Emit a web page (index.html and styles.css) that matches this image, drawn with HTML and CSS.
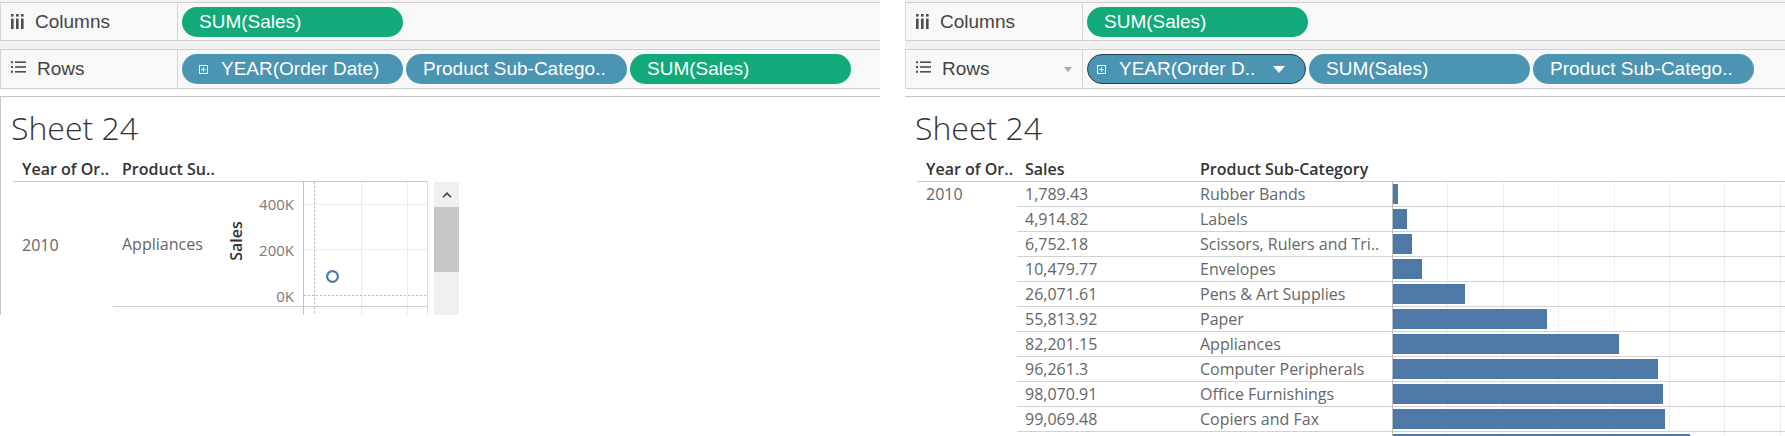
FILE: index.html
```html
<!DOCTYPE html>
<html>
<head>
<meta charset="utf-8">
<title>Sheet 24</title>
<link rel="stylesheet" href="styles.css">
</head>
<body>
<div class="page">
  <section class="panel panel-left">
    <div class="shelves">
      <div class="shelf shelf-cols">
        <div class="shelf-label">
          <svg class="ico ico-cols" width="13" height="15" viewBox="0 0 13 15"><rect x="0" y="0" width="2.6" height="2.6"/><rect x="0" y="4.6" width="2.6" height="10.4"/><rect x="5" y="0" width="2.6" height="2.6"/><rect x="5" y="4.6" width="2.6" height="10.4"/><rect x="10" y="0" width="2.6" height="2.6"/><rect x="10" y="4.6" width="2.6" height="10.4"/></svg>
          <span>Columns</span>
        </div>
        <div class="pills">
          <div class="pill pill-green">SUM(Sales)</div>
        </div>
      </div>
      <div class="shelf shelf-rows">
        <div class="shelf-label">
          <svg class="ico ico-rows" width="15" height="12" viewBox="0 0 15 12"><rect x="0" y="0.2" width="2" height="2"/><rect x="4" y="0.4" width="11" height="1.6"/><rect x="0" y="5" width="2" height="2"/><rect x="4" y="5.2" width="11" height="1.6"/><rect x="0" y="9.8" width="2" height="2"/><rect x="4" y="10" width="11" height="1.6"/></svg>
          <span>Rows</span>
        </div>
        <div class="pills">
          <div class="pill pill-blue"><svg class="ico-plus" width="9" height="9" viewBox="0 0 9 9"><rect x="0.5" y="0.5" width="8" height="8"/><path d="M2.2 4.5H6.8M4.5 2.2V6.8"/></svg><span>YEAR(Order Date)</span></div>
          <div class="pill pill-blue">Product Sub-Catego..</div>
          <div class="pill pill-green">SUM(Sales)</div>
        </div>
      </div>
    </div>
    <div class="sheet sheet-left">
      <h1 class="sheet-title">Sheet 24</h1>
      <div class="lt">
        <div class="hcell lt-h1">Year of Or..</div>
        <div class="hcell lt-h2">Product Su..</div>
        <div class="cell lt-year">2010</div>
        <div class="cell lt-cat">Appliances</div>
        <div class="lt-axis-title"><span>Sales</span></div>
        <div class="lt-ticks"><span>400K</span><span>200K</span><span>0K</span></div>
        <div class="lt-plot">
          <svg width="124" height="124" viewBox="0 0 124 124">
            <line x1="0" y1="22.5" x2="124" y2="22.5" class="g"/>
            <line x1="0" y1="67.5" x2="124" y2="67.5" class="g"/>
            <line x1="57.5" y1="0" x2="57.5" y2="124" class="g"/>
            <line x1="103.5" y1="0" x2="103.5" y2="124" class="g"/>
            <line x1="123.5" y1="0" x2="123.5" y2="124" class="edge"/>
            <line x1="0" y1="113.5" x2="124" y2="113.5" class="zero"/>
            <line x1="10.5" y1="0" x2="10.5" y2="124" class="zero"/>
            <circle cx="28.5" cy="94.5" r="5.4" class="mark"/>
          </svg>
        </div>
        <div class="lt-plot lt-plot-next">
          <svg width="124" height="20" viewBox="0 0 124 20">
            <line x1="57.5" y1="0" x2="57.5" y2="20" class="g"/>
            <line x1="103.5" y1="0" x2="103.5" y2="20" class="g"/>
            <line x1="123.5" y1="0" x2="123.5" y2="20" class="edge"/>
            <line x1="10.5" y1="0" x2="10.5" y2="20" class="zero"/>
          </svg>
        </div>
        <div class="lt-scroll">
          <svg class="scroll-up" width="10" height="6" viewBox="0 0 10 6"><path d="M1 5.2L5 1.2L9 5.2"/></svg>
          <div class="scroll-thumb"></div>
        </div>
      </div>
    </div>
  </section>

  <section class="panel panel-right">
    <div class="shelves">
      <div class="shelf shelf-cols">
        <div class="shelf-label">
          <svg class="ico ico-cols" width="13" height="15" viewBox="0 0 13 15"><rect x="0" y="0" width="2.6" height="2.6"/><rect x="0" y="4.6" width="2.6" height="10.4"/><rect x="5" y="0" width="2.6" height="2.6"/><rect x="5" y="4.6" width="2.6" height="10.4"/><rect x="10" y="0" width="2.6" height="2.6"/><rect x="10" y="4.6" width="2.6" height="10.4"/></svg>
          <span>Columns</span>
        </div>
        <div class="pills">
          <div class="pill pill-green">SUM(Sales)</div>
        </div>
      </div>
      <div class="shelf shelf-rows">
        <div class="shelf-label">
          <svg class="ico ico-rows" width="15" height="12" viewBox="0 0 15 12"><rect x="0" y="0.2" width="2" height="2"/><rect x="4" y="0.4" width="11" height="1.6"/><rect x="0" y="5" width="2" height="2"/><rect x="4" y="5.2" width="11" height="1.6"/><rect x="0" y="9.8" width="2" height="2"/><rect x="4" y="10" width="11" height="1.6"/></svg>
          <span>Rows</span>
          <svg class="label-drop" width="8" height="5" viewBox="0 0 8 5"><path d="M0 0H8L4 5Z"/></svg>
        </div>
        <div class="pills">
          <div class="pill pill-blue pill-selected"><svg class="ico-plus" width="9" height="9" viewBox="0 0 9 9"><rect x="0.5" y="0.5" width="8" height="8"/><path d="M2.2 4.5H6.8M4.5 2.2V6.8"/></svg><span>YEAR(Order D..</span><svg class="pill-drop" width="12" height="7" viewBox="0 0 12 7"><path d="M0 0H12L6 7Z"/></svg></div>
          <div class="pill pill-blue">SUM(Sales)</div>
          <div class="pill pill-blue">Product Sub-Catego..</div>
        </div>
      </div>
    </div>
    <div class="sheet sheet-right">
      <h1 class="sheet-title">Sheet 24</h1>
      <div class="rt">
        <div class="hcell">Year of Or..</div>
        <div class="hcell hcell-sales">Sales</div>
        <div class="hcell hcell-sales">Product Sub-Category</div>
        <div class="hcell"></div>

        <div class="cell rt-year">2010</div><div class="cell rt-val">1,789.43</div><div class="cell rt-val">Rubber Bands</div><div class="rt-bar"><div class="bar" style="width:4.9px"></div></div>
        <div class="cell rt-year"></div><div class="cell rt-val">4,914.82</div><div class="cell rt-val">Labels</div><div class="rt-bar"><div class="bar" style="width:13.5px"></div></div>
        <div class="cell rt-year"></div><div class="cell rt-val">6,752.18</div><div class="cell rt-val">Scissors, Rulers and Tri..</div><div class="rt-bar"><div class="bar" style="width:18.6px"></div></div>
        <div class="cell rt-year"></div><div class="cell rt-val">10,479.77</div><div class="cell rt-val">Envelopes</div><div class="rt-bar"><div class="bar" style="width:28.8px"></div></div>
        <div class="cell rt-year"></div><div class="cell rt-val">26,071.61</div><div class="cell rt-val">Pens &amp; Art Supplies</div><div class="rt-bar"><div class="bar" style="width:71.7px"></div></div>
        <div class="cell rt-year"></div><div class="cell rt-val">55,813.92</div><div class="cell rt-val">Paper</div><div class="rt-bar"><div class="bar" style="width:153.5px"></div></div>
        <div class="cell rt-year"></div><div class="cell rt-val">82,201.15</div><div class="cell rt-val">Appliances</div><div class="rt-bar"><div class="bar" style="width:226.1px"></div></div>
        <div class="cell rt-year"></div><div class="cell rt-val">96,261.3</div><div class="cell rt-val">Computer Peripherals</div><div class="rt-bar"><div class="bar" style="width:264.7px"></div></div>
        <div class="cell rt-year"></div><div class="cell rt-val">98,070.91</div><div class="cell rt-val">Office Furnishings</div><div class="rt-bar"><div class="bar" style="width:269.7px"></div></div>
        <div class="cell rt-year"></div><div class="cell rt-val">99,069.48</div><div class="cell rt-val">Copiers and Fax</div><div class="rt-bar"><div class="bar" style="width:272.4px"></div></div>
        <div class="cell rt-year"></div><div class="cell rt-val"></div><div class="cell rt-val"></div><div class="rt-bar"><div class="bar" style="width:297px"></div></div>
      </div>
    </div>
  </section>
</div>
</body>
</html>
```

FILE: styles.css
```css
* { box-sizing: border-box; }

html, body {
  margin: 0;
  padding: 0;
  background: #ffffff;
}

body {
  width: 1785px;
  height: 436px;
  overflow: hidden;
  font-family: "Open Sans", "Noto Sans", sans-serif;
}

.page {
  display: flex;
  align-items: flex-start;
}

.panel {
  flex: none;
  width: 880px;
}

.panel-right {
  margin-left: 25px;
}

/* ---------- shelves ---------- */
.shelves {
  display: flex;
  flex-direction: column;
  gap: 8px;
  padding-top: 2px;
  background: #f2f2f2;
}

.shelf {
  display: flex;
  align-items: center;
  height: 39px;
  border-top: 1px solid #cfcfcf;
  border-bottom: 1px solid #cfcfcf;
  border-left: 1px solid #d6d6d6;
  background: #f8f8f8;
}

.shelf-rows {
  height: 40px;
}

.shelf-label {
  display: flex;
  align-items: center;
  width: 177px;
  height: 100%;
  padding-left: 10px;
  border-right: 1px solid #d4d4d4;
  font-family: "Liberation Sans", Arial, sans-serif;
  font-size: 19px;
  color: #444444;
}

.ico {
  fill: #4d4d4d;
  flex: none;
}

.ico-cols {
  margin-right: 11px;
  margin-top: -1px;
}

.ico-rows {
  margin-right: 11px;
  margin-top: -4px;
}

.label-drop {
  margin-left: auto;
  margin-right: 10px;
  fill: #a8a8a8;
}

.pills {
  display: flex;
  align-items: center;
  gap: 3px;
  padding-left: 4px;
}

.pill {
  display: flex;
  align-items: center;
  flex: none;
  width: 221px;
  height: 30px;
  padding-left: 17px;
  border-radius: 15px;
  font-family: "Liberation Sans", Arial, sans-serif;
  font-size: 19px;
  color: #ffffff;
  white-space: nowrap;
}

.pill-green {
  background: #12aa7b;
}

.pill-blue {
  background: #4b94b2;
}

.pill-selected {
  width: 219px;
  padding-left: 9px;
  border: 1.5px solid #25404f;
}

.ico-plus {
  flex: none;
  margin-right: 13px;
  fill: none;
  stroke: #ffffff;
  stroke-width: 1;
}

.pill-drop {
  margin-left: 18px;
  fill: #ffffff;
}

/* ---------- sheet ---------- */
.sheet {
  margin-top: 7px;
  padding: 10px 0 0 10px;
  border-top: 1px solid #c6c6c6;
  overflow: hidden;
}

.sheet-left {
  height: 219px;
  border-left: 1px solid #c6c6c6;
}

.sheet-right {
  height: 340px;
}

.sheet-title {
  margin: 0;
  font-family: "Open Sans", sans-serif;
  font-weight: 300;
  font-size: 32px;
  line-height: 42px;
  color: #333333;
}

.hcell {
  height: 25px;
  padding-left: 9px;
  border-bottom: 1px solid #c9c9c9;
  font-size: 16px;
  font-weight: 600;
  line-height: 24px;
  color: #333333;
  white-space: nowrap;
}

.hcell-sales {
  padding-left: 8px;
}

.cell {
  font-size: 16px;
  line-height: 24px;
  color: #666666;
  white-space: nowrap;
  overflow: hidden;
}

/* ---------- left table ---------- */
.lt {
  display: grid;
  grid-template-columns: 100px 112px 25px 53px 125px 6px 25px;
  grid-template-rows: 25px 125px 20px;
  margin-top: 8px;
  margin-left: 2px;
}

.lt-h1 { grid-column: 1; grid-row: 1; }
.lt-h2 { grid-column: 2 / span 4; grid-row: 1; }

.lt-year {
  grid-column: 1;
  grid-row: 2;
  display: flex;
  align-items: center;
  padding-left: 9px;
}

.lt-cat {
  grid-column: 2;
  grid-row: 2;
  display: flex;
  align-items: center;
  padding-left: 9px;
  border-bottom: 1px solid #cdcdcd;
}

.lt-axis-title {
  grid-column: 3;
  grid-row: 2;
  display: flex;
  align-items: center;
  justify-content: center;
  border-bottom: 1px solid #cdcdcd;
}

.lt-axis-title span {
  display: block;
  transform: rotate(-90deg);
  font-size: 16px;
  font-weight: 600;
  color: #333333;
  margin-top: -6px;
  margin-left: -4px;
}

.lt-ticks {
  grid-column: 4;
  grid-row: 2;
  display: flex;
  flex-direction: column;
  justify-content: space-between;
  align-items: flex-end;
  padding: 12px 9px 0 0;
  border-bottom: 1px solid #cdcdcd;
  font-size: 15px;
  line-height: 20px;
  color: #7a7a7a;
}

.lt-plot {
  grid-column: 5;
  grid-row: 2;
  border-left: 1px solid #c4c4c4;
  border-bottom: 1px solid #cdcdcd;
}

.lt-plot svg {
  display: block;
}

.lt-plot-next {
  grid-row: 3;
  border-bottom: none;
}

.lt-plot .g {
  stroke: #ececec;
  stroke-width: 1;
}

.lt-plot .edge {
  stroke: #dedede;
  stroke-width: 1;
}

.lt-plot .zero {
  stroke: #b9b9b9;
  stroke-width: 1;
  stroke-dasharray: 2 2;
}

.lt-plot .mark {
  fill: #ffffff;
  stroke: #4e79a7;
  stroke-width: 2.2;
}

.lt-scroll {
  grid-column: 7;
  grid-row: 2 / span 2;
  display: flex;
  flex-direction: column;
  align-items: center;
  background: #f0f0f0;
}

.scroll-up {
  margin-top: 10px;
  fill: none;
  stroke: #444444;
  stroke-width: 1.6;
}

.scroll-thumb {
  width: 100%;
  height: 65px;
  margin-top: 9px;
  background: #c7c7c7;
}

/* ---------- right table ---------- */
.rt {
  display: grid;
  grid-template-columns: 100px 175px 200px 1fr;
  grid-auto-rows: 25px;
  margin-top: 8px;
  margin-left: 2px;
}

.rt-year {
  padding-left: 9px;
}

.rt-val {
  padding-left: 8px;
  border-bottom: 1px solid #d2d2d2;
}

.rt-bar {
  display: flex;
  align-items: center;
  border-left: 1px solid #bdbdbd;
  border-bottom: 1px solid #d2d2d2;
  background-image: repeating-linear-gradient(90deg, transparent 0, transparent 54.4px, #efefef 54.4px, #efefef 55.4px);
}

.bar {
  height: 20px;
  background: #4e79a7;
}
```
